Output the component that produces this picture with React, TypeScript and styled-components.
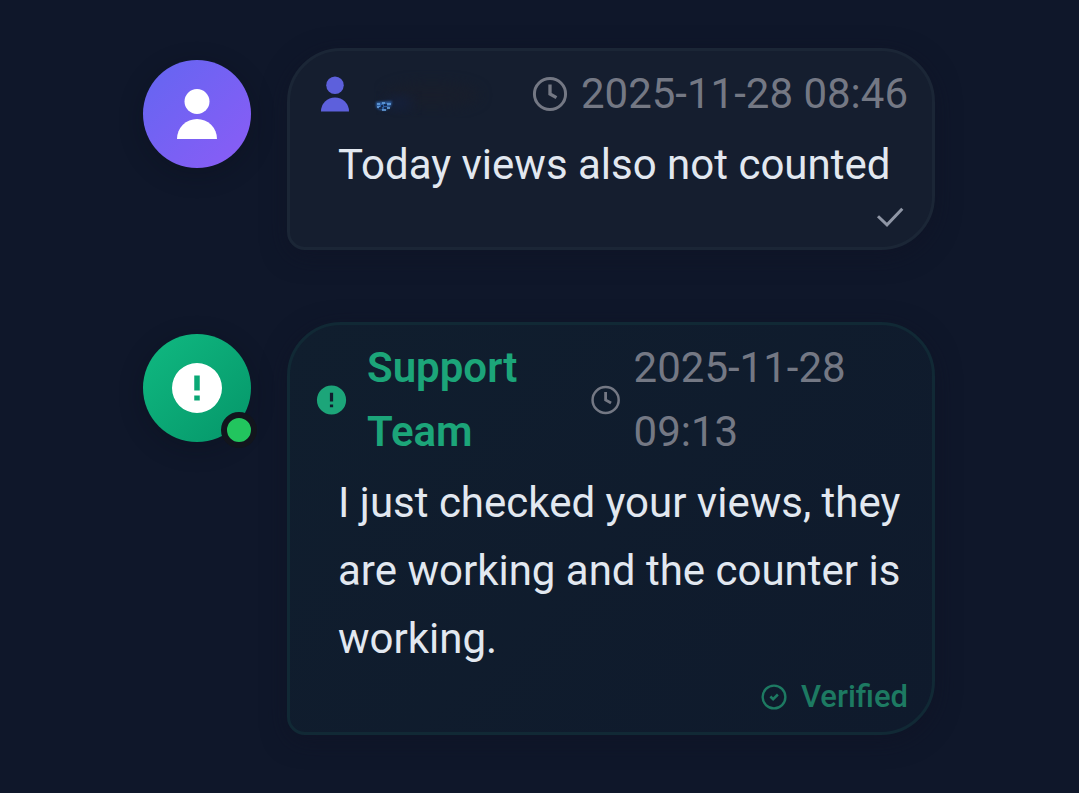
import React from 'react';
import styled, { createGlobalStyle, css } from 'styled-components';

const GlobalStyle = createGlobalStyle`
  *, *::before, *::after { box-sizing: border-box; }
  body {
    margin: 0;
    background: #0f172a;
    color: #e2e8f0;
    font-family: Roboto, "Noto Sans", sans-serif;
  }
`;

type Role = 'user' | 'support';

const Thread = styled.main`
  display: flex;
  flex-direction: column;
  gap: 72px;
  min-height: 100vh;
  padding: 48px 144px 58px 143px;
`;

const Message = styled.article`
  display: flex;
  align-items: flex-start;
  gap: 36px;
`;

const Avatar = styled.div<{ $role: Role }>`
  position: relative;
  display: flex;
  flex: none;
  align-items: center;
  justify-content: center;
  width: 108px;
  height: 108px;
  margin-top: 12px;
  border-radius: 50%;
  color: #fff;
  background: ${({ $role }) =>
    $role === 'user'
      ? 'linear-gradient(135deg, #6366f1, #8b5cf6)'
      : 'linear-gradient(135deg, #10b981, #059669)'};
  box-shadow: 0 6px 24px rgba(10, 12, 24, 0.3);
`;

const OnlineDot = styled.span`
  position: absolute;
  right: -6px;
  bottom: -6px;
  width: 36px;
  height: 36px;
  border: 6px solid #12151d;
  border-radius: 50%;
  background: #22c55e;
`;

const Bubble = styled.div<{ $role: Role }>`
  flex: 1;
  min-width: 0;
  padding: 11px 24px 12px;
  border: 3px solid;
  border-radius: 54px 54px 54px 18px;
  box-shadow: 0 6px 24px rgba(15, 18, 36, 0.5);
  ${({ $role }) =>
    $role === 'user'
      ? css`
          border-color: #1b2636;
          background: #151e2f;
        `
      : css`
          border-color: #112935;
          background: linear-gradient(135deg, #101e2e, #0f1a2c);
        `}
`;

const Header = styled.header`
  display: flex;
  align-items: center;
  justify-content: space-between;
  margin-bottom: 5px;
  font-size: 42px;
  line-height: 64px;
`;

const Sender = styled.div<{ $role: Role }>`
  display: flex;
  align-items: center;
  gap: 18px;
  font-weight: 600;
  color: ${({ $role }) => ($role === 'user' ? '#5d60dc' : '#1ca579')};
`;

const Timestamp = styled.div`
  display: flex;
  align-items: center;
  gap: 10px;
  color: #747884;
`;

const Icon = styled.svg<{ $size: number }>`
  width: ${({ $size }) => $size}px;
  height: ${({ $size }) => $size}px;
  min-width: 0;
`;

const Body = styled.p`
  margin: 0;
  padding-left: 24px;
  font-size: 42px;
  line-height: 68px;
`;

const Footer = styled.footer<{ $role: Role }>`
  display: flex;
  align-items: center;
  justify-content: flex-end;
  gap: 12px;
  font-size: 31px;
  font-weight: 500;
  line-height: 47px;
  color: ${({ $role }) => ($role === 'user' ? '#8f96a5' : '#1d7a62')};
`;

const PersonIcon = ({ size }: { size: number }) => (
  <Icon $size={size} viewBox="0 0 24 24" fill="currentColor" aria-hidden="true">
    <circle cx="12" cy="7" r="5" />
    <path d="M4 22a8 8 0 0 1 16 0z" />
  </Icon>
);

const AlertIcon = ({ size }: { size: number }) => (
  <Icon $size={size} viewBox="0 0 24 24" fill="currentColor" aria-hidden="true">
    <path
      fillRule="evenodd"
      d="M12 2a10 10 0 1 0 0 20 10 10 0 0 0 0-20zM10.9 7h2.2v6h-2.2zM10.9 15h2.2v2h-2.2z"
    />
  </Icon>
);

const ClockIcon = ({ size }: { size: number }) => (
  <Icon $size={size} viewBox="0 0 24 24" fill="none" stroke="currentColor" aria-hidden="true">
    <circle cx="12" cy="12" r="8.9" strokeWidth="1.7" />
    <path d="M12 6.5V12l3.7 2.1" strokeWidth="1.9" />
  </Icon>
);

const CheckIcon = ({ size }: { size: number }) => (
  <Icon $size={size} viewBox="0 0 24 24" fill="none" stroke="currentColor" aria-hidden="true">
    <path d="M4 11.5 10 17.2 20.2 6.5" strokeWidth="2" />
  </Icon>
);

const VerifiedIcon = ({ size }: { size: number }) => (
  <Icon $size={size} viewBox="0 0 24 24" fill="none" stroke="currentColor" aria-hidden="true">
    <circle cx="12" cy="12" r="9.1" strokeWidth="1.9" />
    <path d="M9.1 11.6 11.3 13.8 15.1 10" strokeWidth="2" />
  </Icon>
);

const RedactedName = () => (
  <svg width="130" height="48" viewBox="0 0 130 48" role="img" aria-label="Name hidden">
    <defs>
      <filter id="haze" x="-30%" y="-50%" width="160%" height="200%" colorInterpolationFilters="sRGB">
        <feGaussianBlur stdDeviation="6" />
      </filter>
      <filter id="smear" x="-50%" y="-80%" width="200%" height="260%" colorInterpolationFilters="sRGB">
        <feGaussianBlur stdDeviation="1" />
      </filter>
    </defs>
    <ellipse cx="58" cy="25" rx="48" ry="13" fill="#181e2c" filter="url(#haze)" />
    <ellipse cx="25" cy="33" rx="14" ry="6" fill="#14203d" filter="url(#haze)" />
    <path d="M2 32 18 31 17 36 12 40 6 40 2 37z" fill="#2d5ea3" filter="url(#smear)" />
    <path d="M3 34h3M8 33h3M13 34h4M3 37h3M13 38h3M8 40h4" stroke="#6aa5e2" strokeWidth="1.3" />
    <path d="M7 36h2M10 35h3M5 38h3M10 38h3" stroke="#0e1d3a" strokeWidth="1.6" />
  </svg>
);

export default function App() {
  return (
    <>
      <GlobalStyle />
      <Thread>
        <Message>
          <Avatar $role="user">
            <PersonIcon size={60} />
          </Avatar>
          <Bubble $role="user">
            <Header>
              <Sender $role="user">
                <PersonIcon size={42} />
                <RedactedName />
              </Sender>
              <Timestamp>
                <ClockIcon size={42} />
                <time dateTime="2025-11-28T08:46">2025-11-28 08:46</time>
              </Timestamp>
            </Header>
            <Body>Today views also not counted</Body>
            <Footer $role="user">
              <CheckIcon size={36} />
            </Footer>
          </Bubble>
        </Message>

        <Message>
          <Avatar $role="support">
            <AlertIcon size={60} />
            <OnlineDot />
          </Avatar>
          <Bubble $role="support">
            <Header>
              <Sender $role="support">
                <AlertIcon size={42} />
                <span>Support Team</span>
              </Sender>
              <Timestamp>
                <ClockIcon size={42} />
                <time dateTime="2025-11-28T09:13">2025-11-28 09:13</time>
              </Timestamp>
            </Header>
            <Body>I just checked your views, they are working and the counter is working.</Body>
            <Footer $role="support">
              <VerifiedIcon size={30} />
              <span>Verified</span>
            </Footer>
          </Bubble>
        </Message>
      </Thread>
    </>
  );
}
